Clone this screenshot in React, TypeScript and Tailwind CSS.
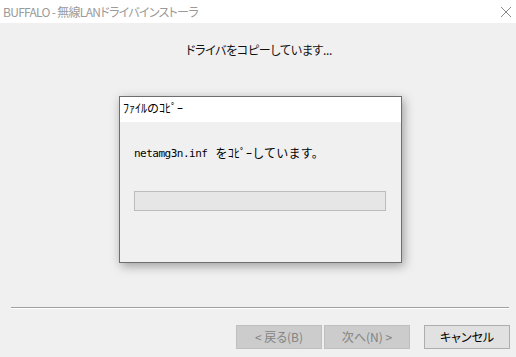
import React from "react";

export default function App() {
  const ui = { fontFamily: '"Noto Sans CJK JP", "Noto Sans", sans-serif' };
  return (
    <div className="w-[516px] h-[357px] bg-[#f0f0f0] flex flex-col overflow-hidden" style={ui}>
      {/* Title bar */}
      <div className="h-[23px] bg-white flex items-center justify-between pl-[3px] pr-[3px] shrink-0">
        <span className="text-[12px] leading-none text-[#9a9a9a] tracking-[-0.7px] [font-feature-settings:'palt']">
          BUFFALO - 無線LANドライバインストーラ
        </span>
        <svg width="12" height="12" viewBox="0 0 12 12" className="mr-[1px]">
          <path d="M1 1 L11 11 M11 1 L1 11" stroke="#8a8a8a" strokeWidth="1" />
        </svg>
      </div>

      {/* Heading */}
      <div className="h-[16px] mt-[19px] flex justify-center items-center shrink-0">
        <span className="text-[12px] leading-none text-[#111] tracking-[-0.3px] [font-feature-settings:'palt'] ml-[2px]">
          ドライバをコピーしています...
        </span>
      </div>

      {/* Dialog */}
      <div className="mt-[38px] ml-[119px] w-[283px] h-[167px] border border-[#6e6e6e] bg-[#f0f0f0] shadow-[2px_3px_10px_rgba(0,0,0,0.35)] flex flex-col shrink-0">
        <div className="h-[25px] bg-white flex items-center pl-[3px] shrink-0">
          <span className="text-[12px] leading-none text-black -mt-[3px]">ﾌｧｲﾙのｺﾋﾟｰ</span>
        </div>
        <div className="flex flex-col pl-[14px]">
          <div className="mt-[24px] h-[14px] flex items-center text-black">
            <span
              className="text-[11px] leading-none tracking-[-0.5px]"
              style={{ fontFamily: '"DejaVu Sans Mono", "Liberation Mono", monospace' }}
            >
              netamg3n.inf
            </span>
            <span className="text-[12px] leading-none ml-[8px] tracking-[0.2px]">をｺﾋﾟｰしています。</span>
          </div>
          <div className="mt-[31px] w-[252px] h-[20px] border border-[#bcbcbc] bg-[#e6e6e6]" />
        </div>
      </div>

      {/* Separator */}
      <div className="mt-[44px] ml-[11px] w-[498px] shrink-0">
        <div className="h-px bg-[#a0a0a0]" />
        <div className="h-px bg-white" />
      </div>

      {/* Buttons */}
      <div className="mt-[16px] flex pl-[236px] shrink-0 [font-feature-settings:'palt']">
        <div className="w-[86px] h-[24px] border border-[#bfbfbf] bg-[#cccccc] flex items-center justify-center text-[12px] text-[#838383]">
          &lt; 戻る(B)
        </div>
        <div className="ml-[2px] w-[86px] h-[24px] border border-[#bfbfbf] bg-[#cccccc] flex items-center justify-center text-[12px] text-[#838383]">
          次へ(N) &gt;
        </div>
        <div className="ml-[14px] w-[86px] h-[24px] border border-[#adadad] bg-[#e1e1e1] flex items-center justify-center text-[12px] text-black">
          キャンセル
        </div>
      </div>
    </div>
  );
}
